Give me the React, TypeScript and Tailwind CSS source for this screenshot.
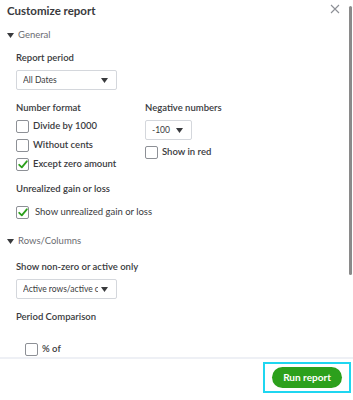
import React from "react";

const font = { fontFamily: "Lato, 'Noto Sans', sans-serif" };

function Caret({ className = "" }: { className?: string }) {
  return (
    <svg width="7" height="5" viewBox="0 0 7 5" className={className}>
      <path d="M0 0 H7 L3.5 5 Z" fill="#393a3d" />
    </svg>
  );
}

function Checkbox({ checked = false }: { checked?: boolean }) {
  return (
    <div className="w-[13px] h-[13px] shrink-0 rounded-[2px] border border-[#8d9096] bg-white flex items-center justify-center">
      {checked && (
        <svg width="10" height="9" viewBox="0 0 10 9">
          <path d="M1.2 4.8 L3.8 7.3 L8.8 1.3" fill="none" stroke="#2ca01c" strokeWidth="1.8" strokeLinecap="round" strokeLinejoin="round" />
        </svg>
      )}
    </div>
  );
}

function Select({ label, width }: { label: string; width: string }) {
  return (
    <div className={`${width} h-[20px] border border-[#d4d7dc] rounded-[2px] bg-white flex items-center pl-[6px] pr-[8px] gap-[3px]`}>
      <span className="text-[8.5px] text-[#393a3d] flex-1 overflow-hidden whitespace-nowrap">{label}</span>
      <Caret className="shrink-0" />
    </div>
  );
}

function CheckRow({ label, checked, bold = true }: { label: string; checked?: boolean; bold?: boolean }) {
  return (
    <div className={`flex items-center h-[13px] ${bold ? "gap-[4px]" : "gap-[6px]"}`}>
      <Checkbox checked={checked} />
      <span className={`text-[9.5px] text-[#393a3d] whitespace-nowrap ${bold ? "font-semibold" : "font-normal"}`}>{label}</span>
    </div>
  );
}

export default function App() {
  return (
    <div className="w-[353px] h-[400px] bg-white relative overflow-hidden" style={font}>
      {/* close */}
      <svg className="absolute left-[330px] top-[4px]" width="10" height="10" viewBox="0 0 10 10">
        <path d="M1 1 L9 9 M9 1 L1 9" stroke="#8d9096" strokeWidth="1.1" />
      </svg>
      {/* scrollbar */}
      <div className="absolute left-[349px] top-[6px] w-[3px] h-[269px] rounded-full bg-[#8a8a8a]" />

      <div className="h-[357px] overflow-hidden">
        <div className="pl-[7px] pt-[3px]">
          <div className="text-[11.5px] font-bold text-[#393a3d] leading-[15px]">Customize report</div>

          <div className="mt-[11px] flex items-center gap-[4px] h-[12px]">
            <Caret />
            <span className="text-[9.5px] text-[#6b6c72]">General</span>
          </div>
        </div>

        <div className="pl-[16px]">
          <div className="mt-[11px] text-[9.5px] font-semibold text-[#393a3d] leading-[12px]">Report period</div>
          <div className="mt-[6px]">
            <Select label="All Dates" width="w-[101px]" />
          </div>

          <div className="mt-[12px] flex">
            <div className="w-[129px] flex flex-col">
              <div className="text-[9.5px] font-semibold text-[#393a3d] leading-[12px]">Number format</div>
              <div className="mt-[6px] flex flex-col gap-[6px]">
                <CheckRow label="Divide by 1000" />
                <CheckRow label="Without cents" />
                <CheckRow label="Except zero amount" checked />
              </div>
            </div>
            <div className="flex flex-col">
              <div className="text-[9.5px] font-semibold text-[#393a3d] leading-[12px]">Negative numbers</div>
              <div className="mt-[6px]">
                <Select label="-100" width="w-[47px]" />
              </div>
              <div className="mt-[6px]">
                <CheckRow label="Show in red" />
              </div>
            </div>
          </div>

          <div className="mt-[12px] text-[9.5px] font-semibold text-[#393a3d] leading-[12px]">Unrealized gain or loss</div>
          <div className="mt-[11px]">
            <CheckRow label="Show unrealized gain or loss" checked bold={false} />
          </div>
        </div>

        <div className="pl-[7px] mt-[16px] flex items-center gap-[4px] h-[12px]">
          <Caret />
          <span className="text-[9.5px] text-[#6b6c72]">Rows/Columns</span>
        </div>

        <div className="pl-[16px]">
          <div className="mt-[14px] text-[9.5px] font-semibold text-[#393a3d] leading-[12px]">Show non-zero or active only</div>
          <div className="mt-[6px]">
            <Select label="Active rows/active columns" width="w-[101px]" />
          </div>
          <div className="mt-[12px] text-[9.5px] font-semibold text-[#393a3d] leading-[12px]">Period Comparison</div>
          <div className="mt-[20px] pl-[9px]">
            <CheckRow label="% of" />
          </div>
        </div>
      </div>

      <div className="h-[2px] bg-[#eef0f5]" />

      <div className="flex justify-end pr-[2px] pt-[3px]">
        <div className="w-[88px] h-[31px] border-2 border-[#1fd6f0] flex items-center justify-center">
          <button className="w-[70px] h-[21px] rounded-full bg-[#2ca01c] text-white text-[10px] font-bold">Run report</button>
        </div>
      </div>
    </div>
  );
}
